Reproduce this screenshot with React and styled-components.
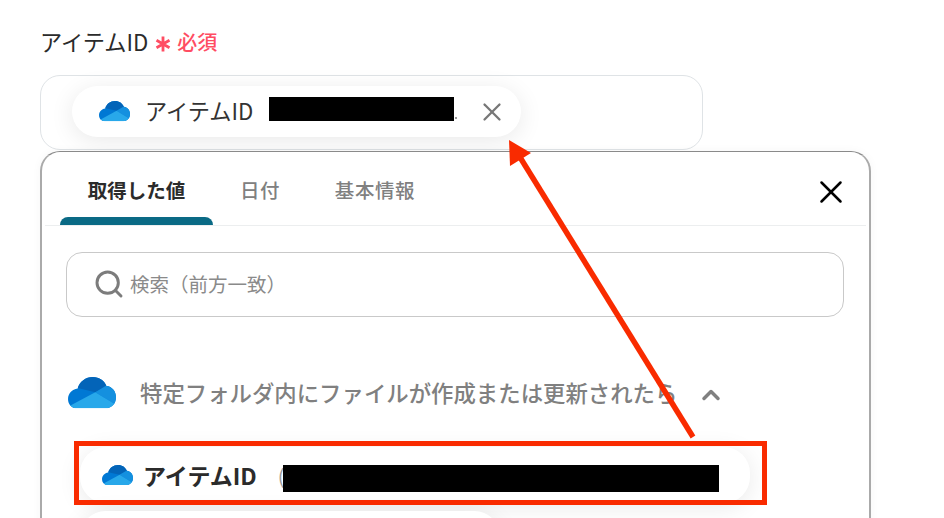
import React, { useId } from "react";
import styled, { createGlobalStyle } from "styled-components";
import { LuX, LuSearch, LuChevronUp } from "react-icons/lu";

const GlobalStyle = createGlobalStyle`
  html, body {
    margin: 0;
    background: #fff;
    font-family: "Noto Sans CJK JP", "Noto Sans", sans-serif;
  }
`;

const Page = styled.div`
  position: relative;
  width: 944px;
  height: 518px;
  overflow: hidden;
  padding: 26px 0 0 40px;
  box-sizing: border-box;
`;

const Label = styled.div`
  display: flex;
  align-items: center;
  height: 30px;
  font-size: 22.2px;
  color: #2b2b2b;
`;

const Required = styled.span`
  display: flex;
  align-items: center;
  margin-left: 7px;
  font-size: 20px;
  font-weight: 500;
  color: #ff4d63;
`;

const Asterisk = styled.svg`
  width: 16px;
  height: 16px;
  margin-right: 6px;
  margin-top: 5px;
`;

const Field = styled.div`
  width: 663px;
  height: 75px;
  margin-top: 19px;
  box-sizing: border-box;
  border: 1px solid #dfe3e6;
  border-radius: 20px;
  padding: 10px 0 0 31px;
`;

const Pill = styled.div`
  display: flex;
  align-items: center;
  width: 449px;
  height: 51px;
  box-sizing: border-box;
  padding-left: 27px;
  border-radius: 26px;
  background: #fff;
  box-shadow: 0 4px 24px rgba(0, 0, 0, 0.09);
`;

const PillText = styled.span`
  margin: 0 0 4px 15px;
  font-size: 22.2px;
  color: #333;
  white-space: nowrap;
`;

const Redaction = styled.span`
  display: block;
  flex: none;
  background: #000;
  width: ${(p) => p.$width}px;
  height: ${(p) => p.$height}px;
  margin-left: ${(p) => p.$left}px;
  transform: translateY(${(p) => p.$shift}px);
`;

const Dot = styled.span`
  width: 2px;
  height: 2px;
  margin: 12px 0 0 1px;
  border-radius: 50%;
  background: #777;
`;

const PillClose = styled(LuX)`
  margin-left: 20px;
  color: #777;
  flex: none;
`;

const Panel = styled.div`
  width: 831px;
  height: 400px;
  margin-top: 1px;
  box-sizing: border-box;
  border: 1px solid #8a8a8a;
  border-right: 2px solid #aaa;
  border-left: 2px solid #aaa;
  border-bottom: none;
  border-radius: 20px 20px 0 0;
  padding: 0 3px;
  background: #fff;
  box-shadow: 0 0 10px rgba(0, 0, 0, 0.04);
`;

const TabBar = styled.div`
  display: flex;
  align-items: flex-end;
  height: 73px;
  border-bottom: 1px solid #eceeef;
  padding-left: 15px;
`;

const Tab = styled.div`
  position: relative;
  height: 73px;
  line-height: 75px;
  box-sizing: border-box;
  width: ${(p) => p.$width}px;
  text-align: center;
  font-size: 19.5px;
  letter-spacing: ${(p) => (p.$active ? 0 : "0.6px")};
  font-weight: ${(p) => (p.$active ? 700 : 500)};
  color: ${(p) => (p.$active ? "#2b2b2b" : "#808080")};
  &::after {
    content: "";
    display: ${(p) => (p.$active ? "block" : "none")};
    position: absolute;
    left: 0;
    right: 0;
    bottom: 0;
    height: 8px;
    border-radius: 8px 8px 0 0;
    background: #0a6a85;
  }
`;

const CloseButton = styled.div`
  margin: 0 16px 14px auto;
  height: 38px;
  color: #000;
`;

const Search = styled.div`
  display: flex;
  align-items: center;
  height: 65px;
  margin: 26px 22px 0 21px;
  padding-left: 26px;
  box-sizing: border-box;
  border: 1px solid #c9c9c9;
  border-radius: 16px;
  color: #8a8a8a;
  font-size: 19.5px;
  line-height: 1;
`;

const SearchIcon = styled(LuSearch)`
  margin: 0 5px 2px 0;
  color: #7c7c7c;
`;

const SearchText = styled.span`
  margin-bottom: 2px;
`;

const SectionHeader = styled.div`
  display: flex;
  align-items: center;
  height: 32px;
  margin: 60px 0 0 23px;
`;

const SectionTitle = styled.span`
  margin: 0 0 2px 24px;
  font-size: 22.4px;
  font-weight: 500;
  color: #808080;
  white-space: nowrap;
`;

const Chevron = styled(LuChevronUp)`
  margin: 4px 0 0 20px;
  color: #808080;
`;

const RowPill = styled(Pill)`
  width: 670px;
  height: 56px;
  margin: 38px 0 0 35px;
  padding-left: 22px;
`;

const RowText = styled(PillText)`
  margin: 0 0 0 10px;
  font-size: 23px;
  font-weight: 700;
  color: #2b2b2b;
`;

const Paren = styled.span`
  margin-left: 21px;
  font-size: 20px;
  color: #999;
`;

const NextPill = styled(Pill)`
  width: 420px;
  margin: 8px 0 0 35px;
`;

const Highlight = styled.div`
  position: absolute;
  left: 74px;
  top: 441px;
  width: 693px;
  height: 64px;
  box-sizing: border-box;
  border: 5px solid #f92b00;
`;

const ArrowOverlay = styled.svg`
  position: absolute;
  left: 0;
  top: 0;
  width: 944px;
  height: 518px;
  pointer-events: none;
`;

function OneDriveIcon({ width }) {
  const id = useId();
  return (
    <svg width={width} height={(width * 31) / 47.5} viewBox="0 0 47.5 31" style={{ flex: "none" }}>
      <clipPath id={id}>
        <path d="M9 31C3.5 31 0 27 0 22C0 16.5 4 12.5 9.5 11.5C11.5 4.5 17.5 0 24.5 0C31 0 36 3.5 38 9C43.5 9.5 47.5 14 47.5 20C47.5 26.5 43 31 37 31Z" />
      </clipPath>
      <g clipPath={`url(#${id})`}>
        <rect width="47.5" height="31" fill="#0078d4" />
        <path d="M9 0H42L38 9.5L27 15L9.5 11Z" fill="#0364b8" />
        <path d="M27 15L38 8.5L50 10V29Z" fill="#1490df" />
        <path d="M27 15L50 29V33H0L1 29Z" fill="#28a8ea" />
      </g>
    </svg>
  );
}

export default function App() {
  return (
    <Page>
      <GlobalStyle />
      <Label>
        アイテムID
        <Required>
          <Asterisk viewBox="0 0 16 16">
            <path d="M8 0.5V15.5M1.5 4.2L14.5 11.8M14.5 4.2L1.5 11.8" stroke="#ff4d63" strokeWidth="2.8" />
          </Asterisk>
          必須
        </Required>
      </Label>
      <Field>
        <Pill>
          <OneDriveIcon width={31} />
          <PillText>アイテムID</PillText>
          <Redaction $width={185} $height={24} $left={16} $shift={-3} />
          <Dot />
          <PillClose size={30} strokeWidth={1.8} />
        </Pill>
      </Field>
      <Panel>
        <TabBar>
          <Tab $active $width={153}>取得した値</Tab>
          <Tab $width={94}>日付</Tab>
          <Tab $width={136}>基本情報</Tab>
          <CloseButton>
            <LuX size={38} strokeWidth={1.6} />
          </CloseButton>
        </TabBar>
        <Search>
          <SearchIcon size={32} strokeWidth={2.2} />
          <SearchText>検索（前方一致）</SearchText>
        </Search>
        <SectionHeader>
          <OneDriveIcon width={48} />
          <SectionTitle>特定フォルダ内にファイルが作成または更新されたら</SectionTitle>
          <Chevron size={28} strokeWidth={3} />
        </SectionHeader>
        <RowPill>
          <OneDriveIcon width={31} />
          <RowText>アイテムID</RowText>
          <Paren>(</Paren>
          <Redaction $width={436} $height={27} $left={-1} $shift={3} />
        </RowPill>
        <NextPill />
      </Panel>
      <Highlight />
      <ArrowOverlay viewBox="0 0 944 518">
        <path d="M693 437L518 154" stroke="#f92b00" strokeWidth="5.5" fill="none" />
        <path d="M509 140L531 153L510 166Z" fill="#f92b00" />
      </ArrowOverlay>
    </Page>
  );
}
